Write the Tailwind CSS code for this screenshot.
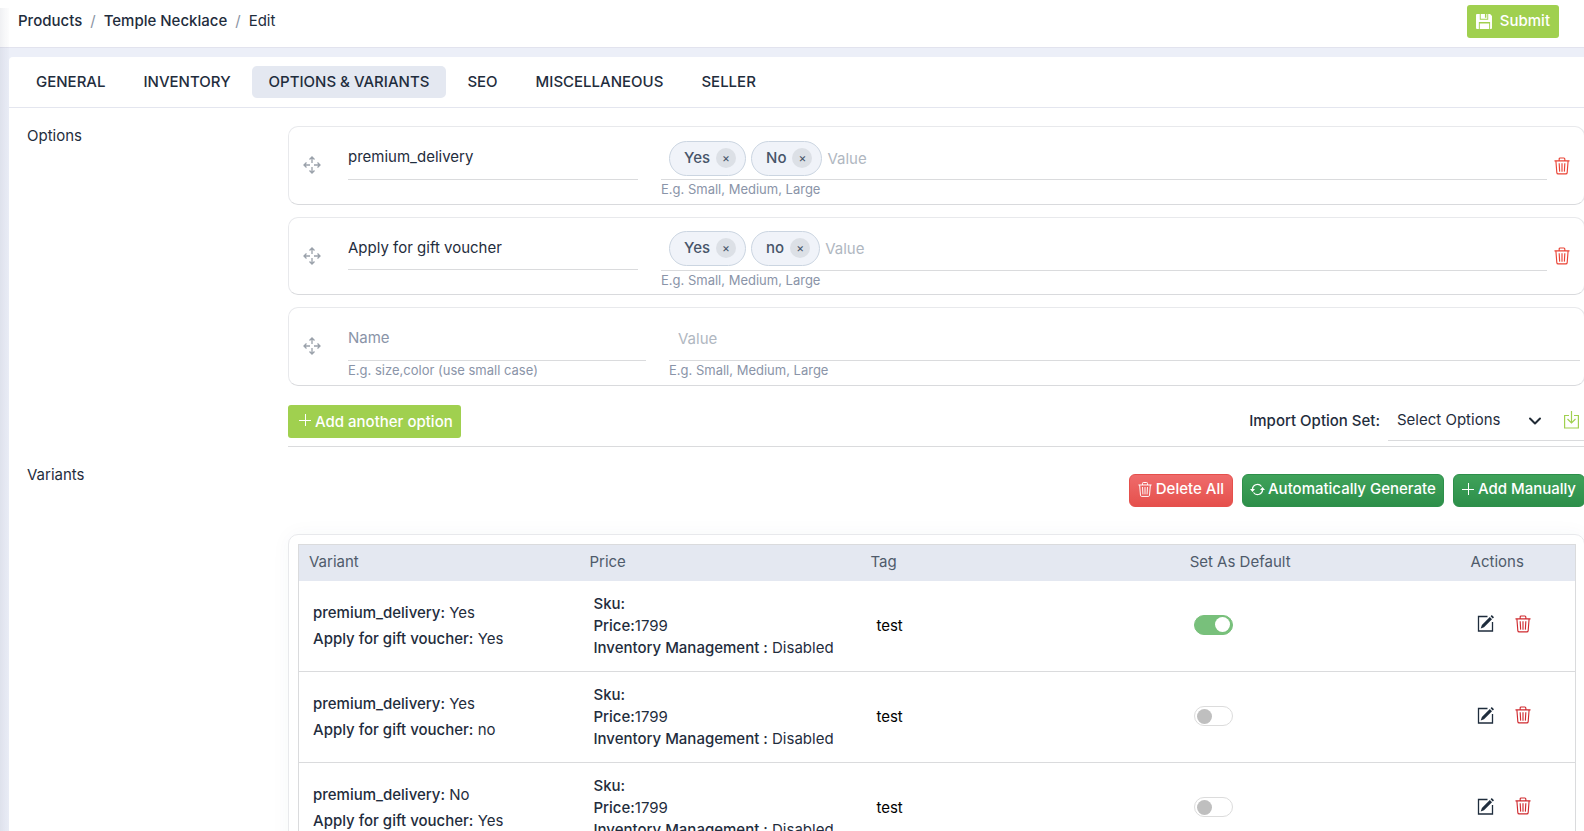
<!DOCTYPE html>
<html lang="en">
<head>
<meta charset="utf-8">
<meta name="viewport" content="width=device-width, initial-scale=1">
<title>Products / Temple Necklace / Edit</title>
<script src="https://cdn.jsdelivr.net/npm/@tailwindcss/browser@4"></script>
</head>
<body class="h-screen overflow-hidden bg-[#eceff8] font-['Inter',sans-serif] text-[15px] leading-[22px] text-[#1f2d3d]">

<svg class="hidden" aria-hidden="true">
  <symbol id="trash" viewBox="0 0 17 18" fill="none" stroke="currentColor">
    <path stroke-width="1.200" d="M.5 3.500h16M5.500 3.500v-2q0-1 1-1h4q1 0 1 1v2M2 3.500l1 12.500q.1 1.400 1.500 1.400h8q1.400 0 1.500-1.400l1-12.500M5.500 6l.5 9M8.500 6v9M11.500 6l-.5 9"/>
  </symbol>
  <symbol id="move" viewBox="0 0 18 18" fill="none" stroke="currentColor">
    <path stroke-width="1.300" d="M9 1v6M9 11v6M1 9h6M11 9h6M6.500 3.500L9 1l2.500 2.500M6.500 14.500L9 17l2.500-2.500M3.500 6.500L1 9l2.500 2.500M14.500 6.500L17 9l-2.500 2.500"/>
  </symbol>
  <symbol id="plus" viewBox="0 0 12 12" fill="none" stroke="currentColor"><path d="M6.500 0v12M0 6.500h12"/></symbol>
  <symbol id="edit" viewBox="0 0 17 17">
    <path d="M10.500 1.500h-9v14.500h14V7" fill="none" stroke="currentColor" stroke-width="1.300"/>
    <path d="M12.800 2l2.200 2.200-8 8-3.300 1.300 1.200-3.400zM13.600 1.200l1.200-1.100 2.200 2.100-1.200 1.200z" fill="currentColor"/>
  </symbol>
  <symbol id="reload" viewBox="0 0 15 13">
    <path fill="none" stroke="currentColor" stroke-width="1.200" d="M2.500 7a5 5 0 0 1 9-3.500M12.500 6a5 5 0 0 1-9 3.500"/>
    <path fill="currentColor" d="M0 6h5L2.500 9zM10 7h5l-2.500-3z"/>
  </symbol>
</svg>

<header class="flex h-12 items-center justify-between border-b border-[#e2e3ee] bg-white pr-[25px] pl-[18px]">
  <nav aria-label="Breadcrumb" class="mb-[5px] flex items-center gap-2">
    <a href="#" class="font-medium">Products</a><span class="text-[#8a94a3]">/</span>
    <a href="#" class="font-medium">Temple Necklace</a><span class="text-[#8a94a3]">/</span>
    <span>Edit</span>
  </nav>
  <button type="button" class="mb-[5px] flex h-[33px] items-center gap-2 rounded-[3px] bg-[#a0d04f] px-[9px] font-medium text-white">
    <svg class="h-[15px] w-4" viewBox="0 0 17 16" aria-hidden="true"><path fill="#fff" d="M0 1q0-1 1-1h3v6h9V0h2l2 2v13q0 1-1 1h-1V8.500H3V16H1q-1 0-1-1zM5 0h4.500v4H11V0h1v5H5zM4 10h10v6H4z"/></svg>
    Submit
  </button>
</header>

<main class="mt-[9px] -mr-px ml-[9px] rounded-tl-[4px] bg-white">
  <nav aria-label="Product sections" class="flex gap-1 border-b border-[#e4e6ef] px-[10px] py-[9px] font-medium">
    <a href="#" class="rounded-[5px] px-[17px] py-[5px]">GENERAL</a>
    <a href="#" class="rounded-[5px] px-[17px] py-[5px]">INVENTORY</a>
    <a href="#" aria-current="page" class="rounded-[5px] bg-[#e4e8f1] px-[17px] py-[5px]">OPTIONS &amp; VARIANTS</a>
    <a href="#" class="rounded-[5px] px-[17px] py-[5px]">SEO</a>
    <a href="#" class="rounded-[5px] px-[17px] py-[5px]">MISCELLANEOUS</a>
    <a href="#" class="rounded-[5px] px-[17px] py-[5px]">SELLER</a>
  </nav>

  <section class="flex pl-[18px]">
    <h2 class="w-[261px] shrink-0 pt-[17px]">Options</h2>
    <div class="min-w-0 flex-1 pt-[18px]">

      <div class="mb-3 flex h-[79px] rounded-[10px] border border-b-[#d9dadd] border-[#e8e9ec] pl-[14px] pr-[14px]">
        <button type="button" aria-label="Reorder" class="mt-[29px] mr-[27px] h-[18px] w-[18px] shrink-0 text-[#9aa1aa]"><svg class="h-[18px] w-[18px]"><use href="#move"/></svg></button>
        <div class="w-[290px] shrink-0 pt-[14px]"><input aria-label="Option name" value="premium_delivery" class="h-[39px] w-full border-b border-[#dadbdd] pb-2 outline-none"></div>
        <div class="ml-[23px] flex-1 pt-[14px]">
          <div class="flex h-[39px] gap-[5px] border-b border-[#dadbdd] pl-2">
            <span class="flex h-[35px] items-center gap-[6px] rounded-full border border-[#cbd5e1] bg-[#f0f3f9] pr-[9px] pb-px pl-[14px] font-medium text-[#475569]">Yes<button type="button" aria-label="Remove Yes" class="h-5 w-5 rounded-full bg-[#dce0e6] text-[12px] leading-5 font-normal">×</button></span>
            <span class="flex h-[35px] items-center gap-[6px] rounded-full border border-[#cbd5e1] bg-[#f0f3f9] pr-[9px] pb-px pl-[14px] font-medium text-[#475569]">No<button type="button" aria-label="Remove No" class="h-5 w-5 rounded-full bg-[#dce0e6] text-[12px] leading-5 font-normal">×</button></span>
            <input aria-label="Option values" placeholder="Value" class="h-[34px] min-w-0 flex-1 outline-none placeholder:text-[#b0b7c1]">
          </div>
          <p class="text-[13px] leading-[18px] text-[#8a94a8]">E.g. Small, Medium, Large</p>
        </div>
        <button type="button" aria-label="Delete option" class="mt-[30px] ml-[7px] h-[18px] w-[16px] shrink-0 text-[#ea4335]"><svg class="h-[18px] w-[16px]"><use href="#trash"/></svg></button>
      </div>

      <div class="mb-3 flex h-[78px] rounded-[10px] border border-b-[#d9dadd] border-[#e8e9ec] pl-[14px] pr-[14px]">
        <button type="button" aria-label="Reorder" class="mt-[29px] mr-[27px] h-[18px] w-[18px] shrink-0 text-[#9aa1aa]"><svg class="h-[18px] w-[18px]"><use href="#move"/></svg></button>
        <div class="w-[290px] shrink-0 pt-[13px]"><input aria-label="Option name" value="Apply for gift voucher" class="h-[39px] w-full border-b border-[#dadbdd] pb-[6px] outline-none"></div>
        <div class="ml-[23px] flex-1 pt-[13px]">
          <div class="flex h-[40px] gap-[5px] border-b border-[#dadbdd] pl-2">
            <span class="flex h-[35px] items-center gap-[6px] rounded-full border border-[#cbd5e1] bg-[#f0f3f9] pr-[9px] pb-px pl-[14px] font-medium text-[#475569]">Yes<button type="button" aria-label="Remove Yes" class="h-5 w-5 rounded-full bg-[#dce0e6] text-[12px] leading-5 font-normal">×</button></span>
            <span class="flex h-[35px] items-center gap-[6px] rounded-full border border-[#cbd5e1] bg-[#f0f3f9] pr-[9px] pb-px pl-[14px] font-medium text-[#475569]">no<button type="button" aria-label="Remove no" class="h-5 w-5 rounded-full bg-[#dce0e6] text-[12px] leading-5 font-normal">×</button></span>
            <input aria-label="Option values" placeholder="Value" class="h-[35px] min-w-0 flex-1 outline-none placeholder:text-[#b0b7c1]">
          </div>
          <p class="text-[13px] leading-[18px] text-[#8a94a8]">E.g. Small, Medium, Large</p>
        </div>
        <button type="button" aria-label="Delete option" class="mt-[29px] ml-[7px] h-[18px] w-[16px] shrink-0 text-[#ea4335]"><svg class="h-[18px] w-[16px]"><use href="#trash"/></svg></button>
      </div>

      <div class="mb-[19px] flex h-[79px] rounded-[10px] border border-b-[#d9dadd] border-[#e8e9ec] pl-[14px] pr-1">
        <button type="button" aria-label="Reorder" class="mt-[29px] mr-[27px] h-[18px] w-[18px] shrink-0 text-[#9aa1aa]"><svg class="h-[18px] w-[18px]"><use href="#move"/></svg></button>
        <div class="w-[298px] shrink-0 pt-[13px]">
          <input aria-label="Option name" placeholder="Name" class="h-[40px] w-full border-b border-[#dadbdd] pb-[6px] outline-none placeholder:text-[#8a94a8]">
          <p class="text-[13px] leading-[18px] text-[#8a94a8]">E.g. size,color (use small case)</p>
        </div>
        <div class="ml-[23px] flex-1 pt-[13px]">
          <input aria-label="Option values" placeholder="Value" class="h-[40px] w-full border-b border-[#dadbdd] pb-[5px] pl-[9px] outline-none placeholder:text-[#b0b7c1]">
          <p class="text-[13px] leading-[18px] text-[#8a94a8]">E.g. Small, Medium, Large</p>
        </div>
      </div>

      <div class="flex h-[42px] items-start justify-between border-b border-[#dadbdd]">
        <button type="button" class="flex h-[33px] items-center gap-1 rounded-[3px] bg-[#a0d04f] pr-2 pl-[11px] font-medium text-white"><svg class="mb-1 h-3 w-3"><use href="#plus"/></svg>Add another option</button>
        <div class="flex">
          <label for="option-set" class="pt-[5px] pr-2 font-medium">Import Option Set:</label>
          <div class="flex h-9 w-[197px] items-start border-b border-[#dadbdd]">
            <div class="relative">
              <select id="option-set" class="h-[30px] w-[162px] appearance-none bg-transparent pl-[9px] outline-none"><option>Select Options</option></select>
              <svg class="pointer-events-none absolute top-3 right-[8px] h-2 w-[14px]" viewBox="0 0 14 8" fill="none" stroke="#212b36" stroke-width="2" stroke-linecap="round" stroke-linejoin="round"><path d="M2 1.500l5 5 5-5"/></svg>
            </div>
            <button type="button" aria-label="Import option set" class="mt-[6px] ml-[14px] h-[18px] w-[15px] text-[#a0d04f]"><svg class="h-[18px] w-[15px]" viewBox="0 0 15 18" fill="none" stroke="currentColor"><path stroke-width="1.200" d="M5 4.500H.6v12.500h13.800V4.500H10M7.500 0v12M3.500 8l4 4 4-4"/></svg></button>
          </div>
        </div>
      </div>
    </div>
  </section>

  <section class="flex pl-[18px]">
    <h2 class="w-[261px] shrink-0 pt-[17px]">Variants</h2>
    <div class="min-w-0 flex-1 pt-[27px]">
      <div class="mb-[27px] flex justify-end gap-[9px] font-medium text-white">
        <button type="button" class="flex h-[33px] items-center gap-1 rounded-[6px] border border-[#e5504c] bg-linear-to-b from-[#ef6b6b] to-[#e5504c] px-2 pb-[3px]"><svg class="h-[15px] w-[14px]"><use href="#trash"/></svg>Delete All</button>
        <button type="button" class="flex h-[33px] items-center gap-[3px] rounded-[6px] border border-[#2d8f4a] bg-linear-to-b from-[#3fa25a] to-[#2d8f4a] px-[7px] pb-[3px]"><svg class="h-[13px] w-[15px]"><use href="#reload"/></svg>Automatically Generate</button>
        <button type="button" class="flex h-[33px] items-center gap-1 rounded-[6px] border border-[#2d8f4a] bg-linear-to-b from-[#3fa25a] to-[#2d8f4a] px-2 pb-[3px]"><svg class="h-3 w-3"><use href="#plus"/></svg>Add Manually</button>
      </div>

      <div class="rounded-[10px] border border-[#e8e9ec] p-[9px] pr-2 shadow-[0_0_20px_rgba(60,70,90,0.04)]">
        <table class="w-full table-fixed border-collapse border border-[#dadbdd] text-left">
          <thead class="bg-[#e4e8f1] text-[#4f5b6b]">
            <tr class="h-9">
              <th class="w-[22%] px-[10px] pb-px font-normal">Variant</th>
              <th class="w-[22%] px-[10px] pb-px font-normal">Price</th>
              <th class="w-[25%] px-[10px] pb-px font-normal">Tag</th>
              <th class="w-[22%] px-[10px] pb-px font-normal">Set As Default</th>
              <th class="w-[9%] px-[10px] pb-px font-normal">Actions</th>
            </tr>
          </thead>
          <tbody>
            <tr class="h-[91px] border-b border-[#dadbdd]">
              <td class="px-[14px] leading-[26px] whitespace-nowrap"><b class="font-medium">premium_delivery:</b> Yes<br><b class="font-medium">Apply for gift voucher:</b> Yes</td>
              <td class="px-[14px] whitespace-nowrap"><b class="font-medium">Sku:</b><br><b class="font-medium">Price:</b>1799<br><b class="font-medium">Inventory Management :</b> Disabled</td>
              <td class="px-4 text-black">test</td>
              <td class="px-[14px] pb-[2px]"><input type="checkbox" checked aria-label="Set as default, variant 1" class="flex h-5 w-[39px] appearance-none items-center rounded-full border border-[#dcdcdc] px-[2px] before:h-[15px] before:w-[15px] before:rounded-full before:bg-[#bfbfbf] checked:justify-end checked:border-[#78c07b] checked:bg-[#78c07b] checked:before:bg-white"></td>
              <td class="px-4 pb-1"><div class="flex gap-[21px]"><button type="button" aria-label="Edit variant 1" class="h-[18px] w-[17px]"><svg class="h-[17px] w-[17px]"><use href="#edit"/></svg></button><button type="button" aria-label="Delete variant 1" class="h-[18px] w-4 text-[#cf2a2f]"><svg class="h-[18px] w-4"><use href="#trash"/></svg></button></div></td>
            </tr>
            <tr class="h-[91px] border-b border-[#dadbdd]">
              <td class="px-[14px] leading-[26px] whitespace-nowrap"><b class="font-medium">premium_delivery:</b> Yes<br><b class="font-medium">Apply for gift voucher:</b> no</td>
              <td class="px-[14px] whitespace-nowrap"><b class="font-medium">Sku:</b><br><b class="font-medium">Price:</b>1799<br><b class="font-medium">Inventory Management :</b> Disabled</td>
              <td class="px-4 text-black">test</td>
              <td class="px-[14px] pb-[2px]"><input type="checkbox" aria-label="Set as default, variant 2" class="flex h-5 w-[39px] appearance-none items-center rounded-full border border-[#dcdcdc] px-[2px] before:h-[15px] before:w-[15px] before:rounded-full before:bg-[#bfbfbf] checked:justify-end checked:border-[#78c07b] checked:bg-[#78c07b] checked:before:bg-white"></td>
              <td class="px-4 pb-1"><div class="flex gap-[21px]"><button type="button" aria-label="Edit variant 2" class="h-[18px] w-[17px]"><svg class="h-[17px] w-[17px]"><use href="#edit"/></svg></button><button type="button" aria-label="Delete variant 2" class="h-[18px] w-4 text-[#cf2a2f]"><svg class="h-[18px] w-4"><use href="#trash"/></svg></button></div></td>
            </tr>
            <tr class="h-[91px]">
              <td class="px-[14px] leading-[26px] whitespace-nowrap"><b class="font-medium">premium_delivery:</b> No<br><b class="font-medium">Apply for gift voucher:</b> Yes</td>
              <td class="px-[14px] whitespace-nowrap"><b class="font-medium">Sku:</b><br><b class="font-medium">Price:</b>1799<br><b class="font-medium">Inventory Management :</b> Disabled</td>
              <td class="px-4 text-black">test</td>
              <td class="px-[14px] pb-[2px]"><input type="checkbox" aria-label="Set as default, variant 3" class="flex h-5 w-[39px] appearance-none items-center rounded-full border border-[#dcdcdc] px-[2px] before:h-[15px] before:w-[15px] before:rounded-full before:bg-[#bfbfbf] checked:justify-end checked:border-[#78c07b] checked:bg-[#78c07b] checked:before:bg-white"></td>
              <td class="px-4 pb-1"><div class="flex gap-[21px]"><button type="button" aria-label="Edit variant 3" class="h-[18px] w-[17px]"><svg class="h-[17px] w-[17px]"><use href="#edit"/></svg></button><button type="button" aria-label="Delete variant 3" class="h-[18px] w-4 text-[#cf2a2f]"><svg class="h-[18px] w-4"><use href="#trash"/></svg></button></div></td>
            </tr>
          </tbody>
        </table>
      </div>
    </div>
  </section>
</main>

<!-- Shadow cast by the collapsed sidebar -->
<div aria-hidden="true" class="pointer-events-none fixed top-2 bottom-0 left-0 w-[9px] bg-linear-to-r from-[#3c4664]/8 to-[#3c4664]/1"></div>
</body>
</html>
